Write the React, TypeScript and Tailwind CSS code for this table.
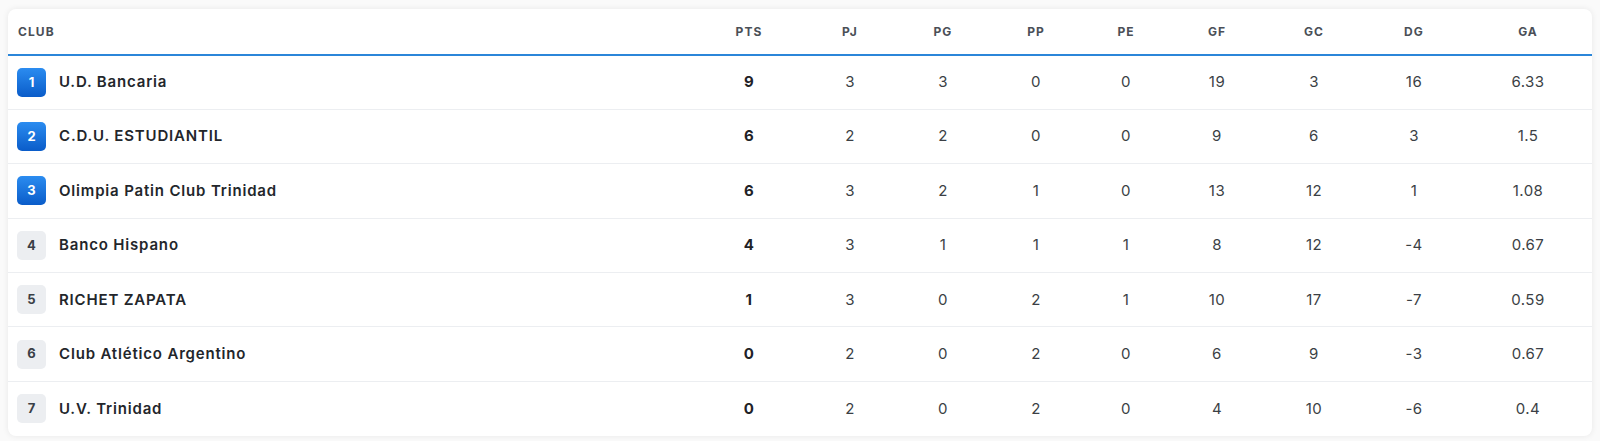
import React from "react";

type Row = {
  pos: number;
  club: string;
  pts: number;
  pj: number;
  pg: number;
  pp: number;
  pe: number;
  gf: number;
  gc: number;
  dg: number;
  ga: string;
};

const rows: Row[] = [
  { pos: 1, club: "U.D. Bancaria", pts: 9, pj: 3, pg: 3, pp: 0, pe: 0, gf: 19, gc: 3, dg: 16, ga: "6.33" },
  { pos: 2, club: "C.D.U. ESTUDIANTIL", pts: 6, pj: 2, pg: 2, pp: 0, pe: 0, gf: 9, gc: 6, dg: 3, ga: "1.5" },
  { pos: 3, club: "Olimpia Patin Club Trinidad", pts: 6, pj: 3, pg: 2, pp: 1, pe: 0, gf: 13, gc: 12, dg: 1, ga: "1.08" },
  { pos: 4, club: "Banco Hispano", pts: 4, pj: 3, pg: 1, pp: 1, pe: 1, gf: 8, gc: 12, dg: -4, ga: "0.67" },
  { pos: 5, club: "RICHET ZAPATA", pts: 1, pj: 3, pg: 0, pp: 2, pe: 1, gf: 10, gc: 17, dg: -7, ga: "0.59" },
  { pos: 6, club: "Club Atlético Argentino", pts: 0, pj: 2, pg: 0, pp: 2, pe: 0, gf: 6, gc: 9, dg: -3, ga: "0.67" },
  { pos: 7, club: "U.V. Trinidad", pts: 0, pj: 2, pg: 0, pp: 2, pe: 0, gf: 4, gc: 10, dg: -6, ga: "0.4" },
];

const cols = [
  { key: "pts", label: "PTS", w: "w-[110px]" },
  { key: "pj", label: "PJ", w: "w-[92px]" },
  { key: "pg", label: "PG", w: "w-[94px]" },
  { key: "pp", label: "PP", w: "w-[92px]" },
  { key: "pe", label: "PE", w: "w-[88px]" },
  { key: "gf", label: "GF", w: "w-[94px]" },
  { key: "gc", label: "GC", w: "w-[100px]" },
  { key: "dg", label: "DG", w: "w-[100px]" },
  { key: "ga", label: "GA", w: "w-[128px]" },
] as const;

const Badge = ({ pos }: { pos: number }) => {
  const top = pos <= 3;
  return (
    <span
      className={
        top
          ? "flex h-[29px] w-[29px] items-center justify-center rounded-[5px] bg-gradient-to-b from-[#2b8cf0] to-[#0a5cc9] text-[13px] font-bold text-white"
          : "flex h-[29px] w-[29px] items-center justify-center rounded-[5px] bg-[#eceef1] text-[13px] font-bold text-[#3a3f47]"
      }
    >
      {pos}
    </span>
  );
};

export default function App() {
  return (
    <div className="min-h-[441px] bg-[#fafafa] px-2 pt-[9px] font-['Inter',sans-serif] text-[#2b2f36]">
      <div className="overflow-hidden rounded-lg bg-white shadow-[0_0_6px_rgba(0,0,0,0.08)]">
        <table className="w-full table-fixed border-collapse">
          <thead>
            <tr className="h-[46px] border-b-2 border-[#2b86d9]">
              <th className="pl-[10px] text-left text-[12px] font-bold tracking-[0.09em] text-[#4a4f57]">
                CLUB
              </th>
              {cols.map((c) => (
                <th
                  key={c.key}
                  className={`${c.w} text-center text-[12px] font-bold tracking-[0.09em] text-[#4a4f57]`}
                >
                  {c.label}
                </th>
              ))}
            </tr>
          </thead>
          <tbody>
            {rows.map((r, i) => (
              <tr
                key={r.pos}
                className={
                  i < rows.length - 1
                    ? "h-[54.4px] border-b border-[#eceef1]"
                    : "h-[54.4px]"
                }
              >
                <td className="pl-[9px]">
                  <div className="flex items-center gap-[13px]">
                    <Badge pos={r.pos} />
                    <span className="text-[15px] font-semibold tracking-[0.055em] text-[#23262b]">
                      {r.club}
                    </span>
                  </div>
                </td>
                {cols.map((c) => (
                  <td
                    key={c.key}
                    className={
                      c.key === "pts"
                        ? "text-center text-[15px] font-bold tracking-[0.03em] text-[#1f2227]"
                        : "text-center text-[15px] tracking-[0.03em] text-[#3b3f45]"
                    }
                  >
                    {r[c.key]}
                  </td>
                ))}
              </tr>
            ))}
          </tbody>
        </table>
      </div>
    </div>
  );
}
